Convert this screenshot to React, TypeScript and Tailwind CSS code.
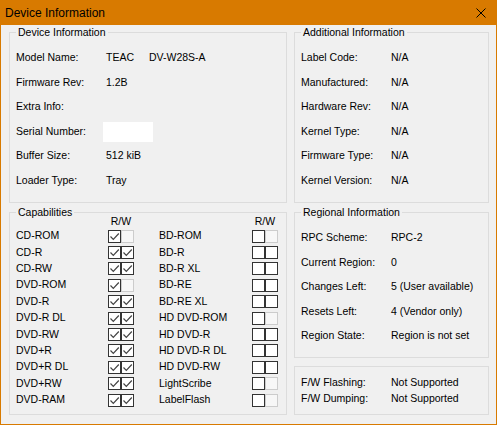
import React from 'react'

const font = { fontFamily: '"Liberation Sans", Arial, sans-serif' }

type Row = [string, React.ReactNode]

function Group({ title, className, children }: { title: string; className: string; children: React.ReactNode }) {
  return (
    <div className={`relative border border-[#dcdcdc] ${className}`}>
      <span className="absolute left-[6px] top-[-7px] h-[12px] bg-[#f0f0f0] px-[2px] leading-[12px]">{title}</span>
      {children}
    </div>
  )
}

function InfoRows({ rows, rowH }: { rows: Row[]; rowH: string }) {
  return (
    <>
      {rows.map(([label, value]) => (
        <div key={label} className={`flex items-center ${rowH}`}>
          <div className="w-[90px] shrink-0">{label}</div>
          <div className="flex items-center">{value}</div>
        </div>
      ))}
    </>
  )
}

// state: 'c' checked, 'u' unchecked (enabled), 'd' disabled
function Box({ state }: { state: string }) {
  if (state === 'd') {
    return <div className="h-[13px] w-[13px] border border-[#cccccc] bg-[#f7f7f7]" />
  }
  return (
    <div className="h-[13px] w-[13px] border border-[#333333] bg-white">
      {state === 'c' && (
        <svg width="11" height="11" viewBox="0 0 11 11" className="block">
          <polyline points="1.5,5.5 4.3,8.3 9.8,2.5" fill="none" stroke="#444444" strokeWidth="1.2" />
        </svg>
      )}
    </div>
  )
}

const caps: [string, string, string, string, string, string][] = [
  ['CD-ROM', 'c', 'd', 'BD-ROM', 'u', 'd'],
  ['CD-R', 'c', 'c', 'BD-R', 'u', 'u'],
  ['CD-RW', 'c', 'c', 'BD-R XL', 'u', 'u'],
  ['DVD-ROM', 'c', 'd', 'BD-RE', 'u', 'u'],
  ['DVD-R', 'c', 'c', 'BD-RE XL', 'u', 'u'],
  ['DVD-R DL', 'c', 'c', 'HD DVD-ROM', 'u', 'd'],
  ['DVD-RW', 'c', 'c', 'HD DVD-R', 'u', 'u'],
  ['DVD+R', 'c', 'c', 'HD DVD-R DL', 'u', 'u'],
  ['DVD+R DL', 'c', 'c', 'HD DVD-RW', 'u', 'u'],
  ['DVD+RW', 'c', 'c', 'LightScribe', 'u', 'd'],
  ['DVD-RAM', 'c', 'c', 'LabelFlash', 'u', 'd'],
]

export default function App() {
  return (
    <div
      className="flex h-[425px] w-[497px] flex-col border-x border-b border-[#d87a00] bg-[#f0f0f0] text-[10.5px] text-black"
      style={font}
    >
      {/* Title bar */}
      <div className="flex h-[25px] shrink-0 items-center justify-between bg-[#d87a00] pl-[4px] pr-[10px]">
        <span className="text-[12px]">Device Information</span>
        <svg width="10" height="10" viewBox="0 0 10 10">
          <path d="M0.5 0.5 L9.5 9.5 M9.5 0.5 L0.5 9.5" stroke="#000" strokeWidth="1" />
        </svg>
      </div>

      <div className="flex gap-[7px] pl-[8px] pr-[7px] pt-[7px]">
        {/* Left column */}
        <div className="flex w-[278px] flex-col gap-[9px]">
          <Group title="Device Information" className="h-[171px] pl-[6px] pt-[13px]">
            <InfoRows
              rowH="h-[24.5px]"
              rows={[
                [
                  'Model Name:',
                  <>
                    <span className="w-[43px]">TEAC</span>
                    <span>DV-W28S-A</span>
                  </>,
                ],
                ['Firmware Rev:', '1.2B'],
                ['Extra Info:', ''],
                ['Serial Number:', <div className="ml-[-3px] h-[20px] w-[50px] bg-white" />],
                ['Buffer Size:', '512 kiB'],
                ['Loader Type:', 'Tray'],
              ]}
            />
          </Group>

          <Group title="Capabilities" className="h-[203px] pl-[6px] pt-[3px]">
            <div className="flex h-[12px] items-center">
              <div className="w-[92px]" />
              <div className="w-[26px] text-center">R/W</div>
              <div className="w-[118px]" />
              <div className="w-[26px] text-center">R/W</div>
            </div>
            {caps.map(([a, ar, aw, b, br, bw]) => (
              <div key={a} className="flex h-[16.4px] items-center">
                <div className="w-[92px]">{a}</div>
                <div className="flex w-[26px]">
                  <Box state={ar} />
                  <Box state={aw} />
                </div>
                <div className="w-[25px]" />
                <div className="w-[93px]">{b}</div>
                <div className="flex w-[26px]">
                  <Box state={br} />
                  <Box state={bw} />
                </div>
              </div>
            ))}
          </Group>
        </div>

        {/* Right column */}
        <div className="flex w-[195px] flex-col">
          <Group title="Additional Information" className="h-[171px] pl-[6px] pt-[13px]">
            <InfoRows
              rowH="h-[24.5px]"
              rows={[
                ['Label Code:', 'N/A'],
                ['Manufactured:', 'N/A'],
                ['Hardware Rev:', 'N/A'],
                ['Kernel Type:', 'N/A'],
                ['Firmware Type:', 'N/A'],
                ['Kernel Version:', 'N/A'],
              ]}
            />
          </Group>

          <Group title="Regional Information" className="mt-[9px] h-[146px] pl-[6px] pt-[13px]">
            <InfoRows
              rowH="h-[24.5px]"
              rows={[
                ['RPC Scheme:', 'RPC-2'],
                ['Current Region:', '0'],
                ['Changes Left:', '5 (User available)'],
                ['Resets Left:', '4 (Vendor only)'],
                ['Region State:', 'Region is not set'],
              ]}
            />
          </Group>

          <div className="mt-[8px] h-[49px] border border-[#dcdcdc] pl-[6px] pt-[8px]">
            <InfoRows
              rowH="h-[16px]"
              rows={[
                ['F/W Flashing:', 'Not Supported'],
                ['F/W Dumping:', 'Not Supported'],
              ]}
            />
          </div>
        </div>
      </div>
    </div>
  )
}
